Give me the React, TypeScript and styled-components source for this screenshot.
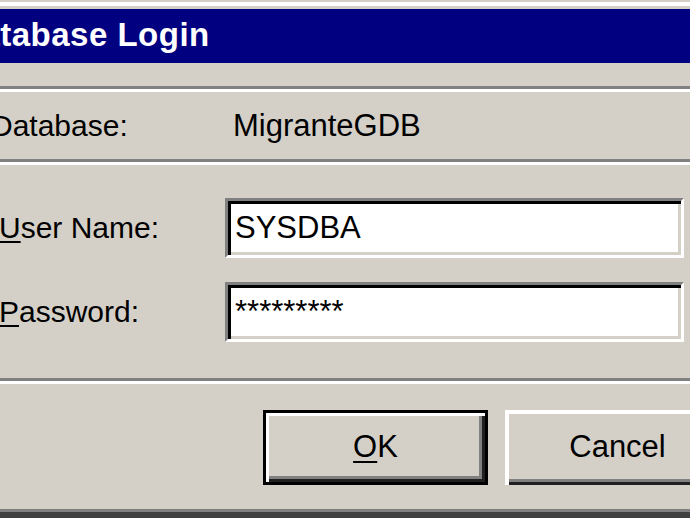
import React from "react";
import styled, { createGlobalStyle } from "styled-components";

const GlobalStyle = createGlobalStyle`
  html, body {
    margin: 0;
    padding: 0;
    background: #d4d0c8;
    overflow: hidden;
  }
  body {
    font-family: "Liberation Sans", Arial, sans-serif;
  }
`;

const Window = styled.div`
  margin-left: -48px;
  margin-top: 2px;
  width: 820px;
  background: #d4d0c8;
  border-top: 4px solid #ffffff;
  padding-top: 3px;
  border-bottom: 6px solid #404040;
  box-shadow: inset 0 -3px 0 #808080;
`;

const TitleBar = styled.div`
  height: 54px;
  background: #000080;
  display: flex;
  align-items: center;
  padding: 0 0 3px 5px;
  box-sizing: border-box;
  color: #ffffff;
  font-weight: bold;
  font-size: 33px;
  letter-spacing: 0.5px;
  white-space: nowrap;
`;

const Groove = styled.div<{ $top?: number }>`
  height: 6px;
  box-sizing: border-box;
  margin-top: ${(p) => p.$top ?? 0}px;
  border-top: 3px solid #808080;
  border-bottom: 3px solid #ffffff;
`;

const InfoRow = styled.div`
  height: 67px;
  display: grid;
  grid-template-columns: 242px 1fr;
  align-items: center;
  padding-left: 39px;
  font-size: 30px;
  color: #000;
`;

const InfoValue = styled.span`
  font-size: 31px;
`;

const Form = styled.div`
  display: flex;
  flex-direction: column;
  gap: 24px;
  padding: 33px 0 36px 47px;
`;

const FieldRow = styled.div`
  display: grid;
  grid-template-columns: 226px 459px;
  align-items: center;
`;

const Label = styled.label`
  font-size: 30px;
  color: #000;
  white-space: nowrap;

  u {
    text-decoration-thickness: 2px;
    text-underline-offset: 3px;
  }
`;

const Field = styled.div`
  height: 60px;
  box-sizing: border-box;
  background: #ffffff;
  border-style: solid;
  border-width: 3px;
  border-color: #808080 #ffffff #ffffff #808080;
  box-shadow: inset 3px 3px 0 #000000, inset -3px -3px 0 #d4d0c8;
  padding: 0 0 0 7px;
  display: flex;
  align-items: center;
  font-size: 31px;
  color: #000;
  white-space: nowrap;
`;

const ButtonRow = styled.div`
  display: flex;
  gap: 17px;
  padding: 26px 0 27px 311px;
`;

const Button = styled.button<{ $default?: boolean }>`
  width: 225px;
  height: 75px;
  box-sizing: border-box;
  background: #d4d0c8;
  font-family: "Liberation Sans", Arial, sans-serif;
  font-size: 31px;
  color: #000;
  padding: 0 0 2px 0;
  margin: 0;
  border: ${(p) => (p.$default ? "3px solid #000000" : "0")};
  box-shadow: ${(p) =>
    p.$default
      ? "inset 3px 3px 0 #ffffff, inset -3px -3px 0 #202020, inset -6px -6px 0 #808080"
      : "inset 4px 4px 0 #ffffff, inset -3px -3px 0 #202020, inset -6px -6px 0 #808080"};

  u {
    text-decoration-thickness: 2px;
    text-underline-offset: 4px;
  }
`;

export default function App() {
  return (
    <>
      <GlobalStyle />
      <Window>
        <TitleBar>Database Login</TitleBar>
        <Groove $top={23} />
        <InfoRow>
          <span>Database:</span>
          <InfoValue>MigranteGDB</InfoValue>
        </InfoRow>
        <Groove />
        <Form>
          <FieldRow>
            <Label>
              <u>U</u>ser Name:
            </Label>
            <Field>SYSDBA</Field>
          </FieldRow>
          <FieldRow>
            <Label>
              <u>P</u>assword:
            </Label>
            <Field>*********</Field>
          </FieldRow>
        </Form>
        <Groove />
        <ButtonRow>
          <Button $default>
            <u>O</u>K
          </Button>
          <Button>Cancel</Button>
        </ButtonRow>
      </Window>
    </>
  );
}
